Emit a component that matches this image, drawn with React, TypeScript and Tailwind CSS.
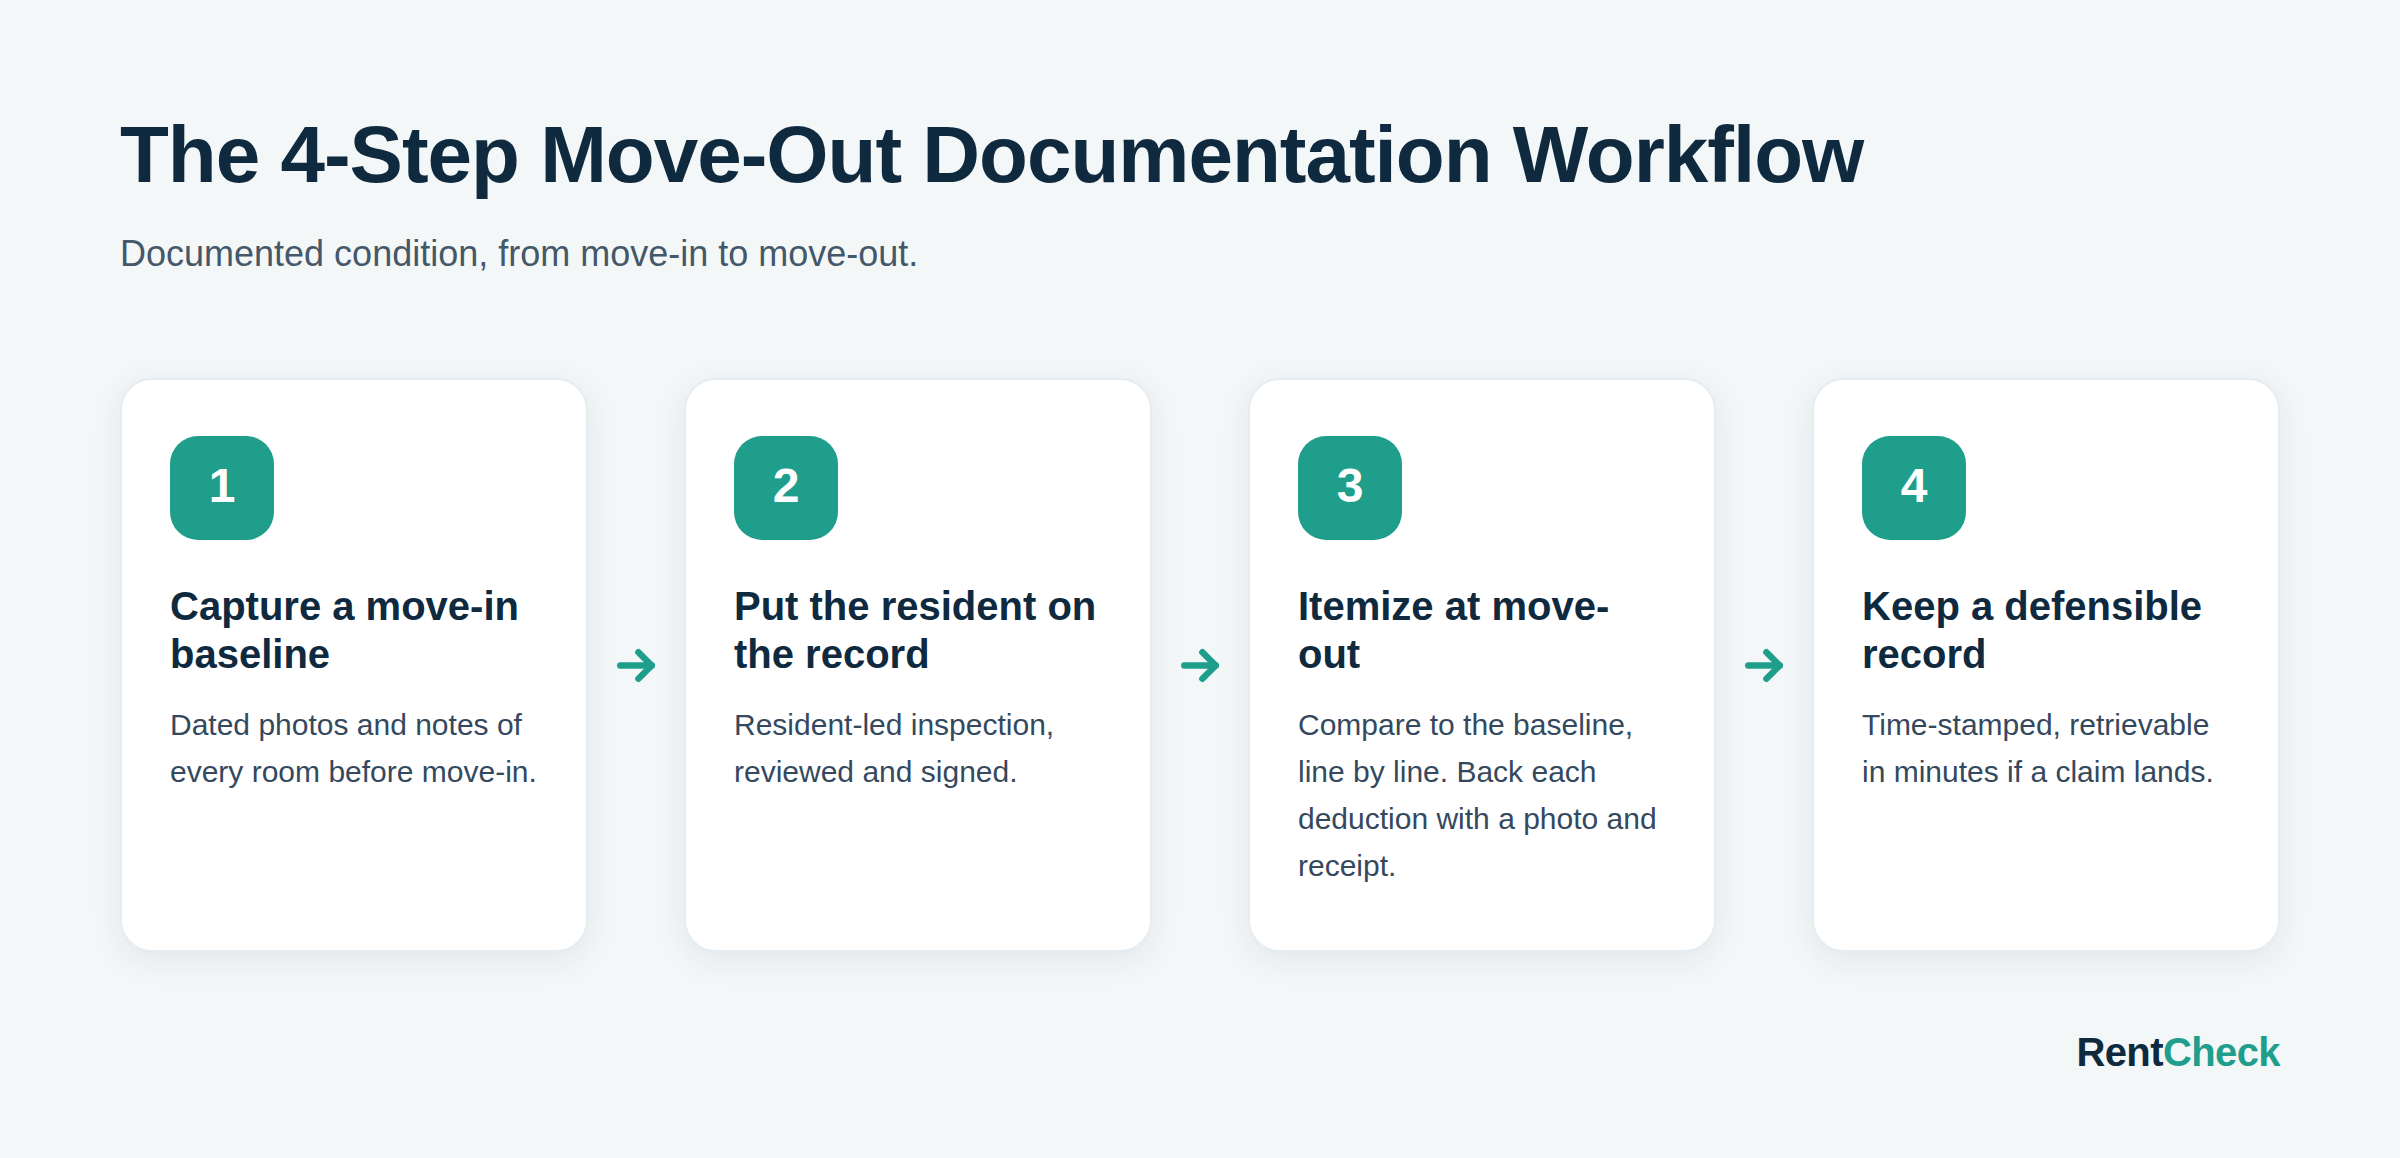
const steps = [
  { n: "1", title: "Capture a move-in baseline", body: "Dated photos and notes of every room before move-in." },
  { n: "2", title: "Put the resident on the record", body: "Resident-led inspection, reviewed and signed." },
  { n: "3", title: "Itemize at move-out", body: "Compare to the baseline, line by line. Back each deduction with a photo and receipt." },
  { n: "4", title: "Keep a defensible record", body: "Time-stamped, retrievable in minutes if a claim lands." },
];

function Arrow() {
  return (
    <div className="flex w-[96px] shrink-0 items-center justify-center">
      <svg width="48" height="48" viewBox="0 0 48 48" fill="none" stroke="#1f9e8c" strokeWidth="6.5" strokeLinecap="round" strokeLinejoin="round">
        <path d="M8.3 24.5h31.4" />
        <path d="M26.4 11.2l13.3 13.3-13.3 13.3" />
      </svg>
    </div>
  );
}

export default function App() {
  return (
    <div className="flex h-[1158px] w-[2400px] flex-col bg-[#f4f7f8] px-[120px] pt-[109px] font-['Liberation_Sans',sans-serif]">
      <h1 className="text-[80px] font-bold leading-[92px] tracking-[-1px] text-[#0f2a3f]">The 4-Step Move-Out Documentation Workflow</h1>
      <p className="mt-[31px] text-[36px] leading-[1.2] text-[#44586a]">Documented condition, from move-in to move-out.</p>
      <div className="mt-[103px] flex h-[574px] items-stretch">
        {steps.map((s, i) => (
          <div key={s.n} className="contents">
            {i > 0 && <Arrow />}
            <div className="w-[468px] shrink-0 rounded-[32px] border-2 border-[#e6ecf0] bg-white px-[48px] pt-[56px] shadow-[0_8px_32px_rgba(15,42,63,0.08)]">
              <div className="flex h-[104px] w-[104px] items-center justify-center rounded-[28px] bg-[#1f9e8c] pb-[4px] text-[48px] font-bold text-white">{s.n}</div>
              <h2 className="mt-[42px] text-[40px] font-bold leading-[48px] text-[#0f2a3f]">{s.title}</h2>
              <p className="mt-[24.3px] text-[30px] leading-[46.8px] text-[#34495e]">{s.body}</p>
            </div>
          </div>
        ))}
      </div>
      <div className="mt-[80px] text-right text-[40px] font-bold leading-none tracking-[-0.6px] text-[#0f2a3f]">
        Rent<span className="text-[#1f9e8c]">Check</span>
      </div>
    </div>
  );
}
